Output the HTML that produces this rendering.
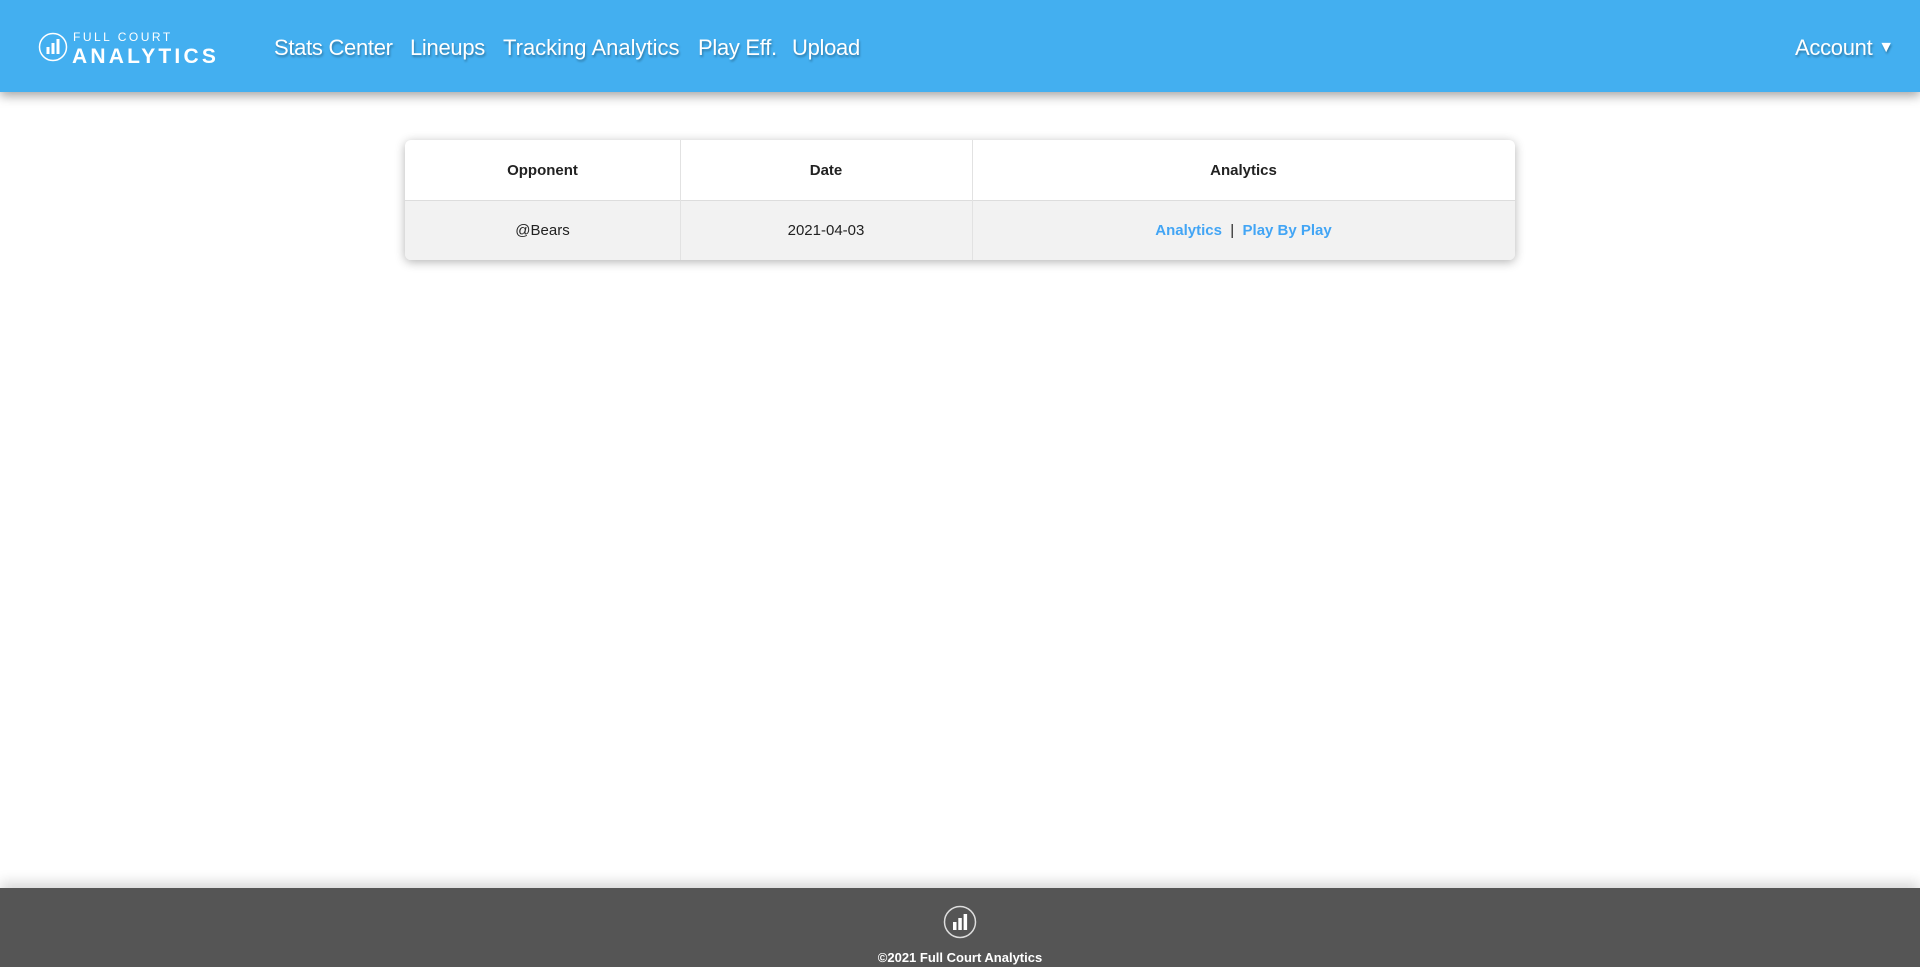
<!DOCTYPE html>
<html><head><style>
body{margin:0;width:1920px;height:967px;position:relative;background:#fff;font-family:"Liberation Sans",sans-serif;overflow:hidden}
.hdr{position:absolute;left:0;top:0;width:1920px;height:92px;background:#43aff0;box-shadow:0 4px 10px rgba(0,0,0,.35)}
.nav{position:absolute;top:35px;color:#fff;font-size:22px;text-shadow:1px 2px 2px rgba(0,0,0,.3);white-space:nowrap;letter-spacing:-0.3px}
.tbl{position:absolute;left:405px;top:140px;width:1110px;height:120px;border-radius:6px;box-shadow:0 2px 10px rgba(0,0,0,.3);overflow:hidden;background:#fff}
.cell{position:absolute;height:60px;line-height:62px;text-align:center;font-size:15px;color:#222}
.ftr{position:absolute;left:0;top:888px;width:1920px;height:79px;background:#555;box-shadow:0 -6px 12px rgba(0,0,0,.15)}
</style></head><body>
<div class="hdr">
<svg style="position:absolute;left:38px;top:32px" width="30" height="30" viewBox="0 0 30 30"><circle cx="15" cy="15" r="13.5" fill="none" stroke="#fff" stroke-width="1.5"/><rect x="8.5" y="15" width="3" height="7" fill="#fff"/><rect x="13.5" y="11" width="3" height="11" fill="#fff"/><rect x="18.5" y="7" width="3" height="15" fill="#fff"/></svg>
<div style="position:absolute;left:73px;top:30px;color:#fff;font-size:12px;letter-spacing:2.5px">FULL COURT</div>
<div style="position:absolute;left:72px;top:45px;color:#fff;font-size:21px;font-weight:bold;letter-spacing:3.2px">ANALYTICS</div>
<div class="nav" style="left:274px">Stats Center</div>
<div class="nav" style="left:410px">Lineups</div>
<div class="nav" style="left:503px;letter-spacing:0">Tracking Analytics</div>
<div class="nav" style="left:698px">Play Eff.</div>
<div class="nav" style="left:792px">Upload</div>
<div class="nav" style="left:1795px">Account <span style="font-size:16px;position:relative;top:-3px">▼</span></div>
</div>
<div class="tbl">
<div style="position:absolute;left:0;top:60px;width:1110px;height:60px;background:#f2f2f2;border-top:1px solid #ddd"></div>
<div style="position:absolute;left:275px;top:0;width:1px;height:120px;background:#e2e2e2"></div>
<div style="position:absolute;left:567px;top:0;width:1px;height:120px;background:#e2e2e2"></div>
<div class="cell" style="left:0;top:0;width:275px;font-weight:bold">Opponent</div>
<div class="cell" style="left:275px;top:0;width:292px;font-weight:bold">Date</div>
<div class="cell" style="left:567px;top:0;width:543px;font-weight:bold">Analytics</div>
<div class="cell" style="left:0;top:60px;width:275px">@Bears</div>
<div class="cell" style="left:275px;top:60px;width:292px">2021-04-03</div>
<div class="cell" style="left:567px;top:60px;width:543px"><span style="color:#42a5f5;font-weight:bold">Analytics</span> &nbsp;|&nbsp; <span style="color:#42a5f5;font-weight:bold">Play By Play</span></div>
</div>
<div class="ftr">
<svg style="position:absolute;left:943px;top:17px" width="34" height="34" viewBox="0 0 34 34"><circle cx="17" cy="17" r="15.5" fill="none" stroke="#ddd" stroke-width="1.5"/><rect x="10" y="17" width="3.5" height="8" fill="#fff"/><rect x="15.3" y="13" width="3.5" height="12" fill="#fff"/><rect x="20.6" y="9" width="3.5" height="16" fill="#fff"/></svg>
<div style="position:absolute;left:0;width:1920px;top:62px;text-align:center;color:#fff;font-size:13px;font-weight:bold">©2021 Full Court Analytics</div>
</div>
</body></html>
